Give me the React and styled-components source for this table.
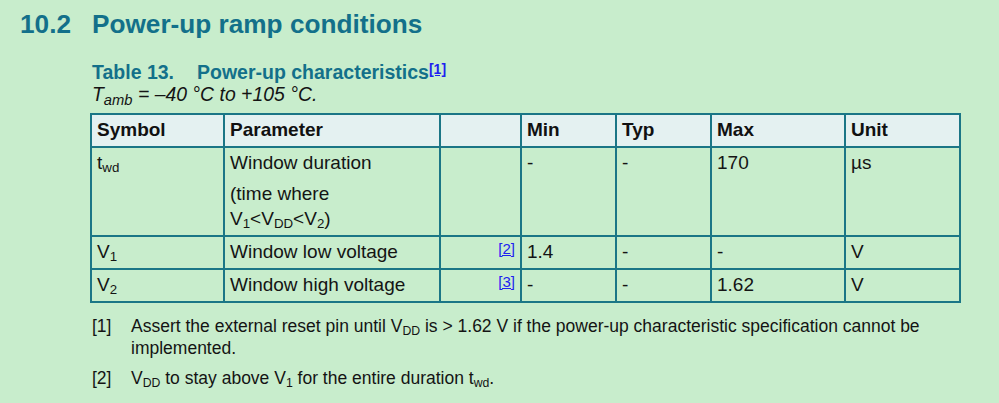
import React from 'react'
import styled, { createGlobalStyle } from 'styled-components'

const GlobalStyle = createGlobalStyle`
  html, body {
    margin: 0;
    padding: 0;
    background: #c8edcc;
  }
  body {
    font-family: "Liberation Sans", Arial, sans-serif;
    color: #141414;
  }
`

const Page = styled.div`
  width: 999px;
  height: 403px;
  overflow: hidden;
  padding: 10px 0 0 20px;
  box-sizing: border-box;
`

const Heading = styled.h2`
  display: flex;
  margin: 0;
  font-size: 26.2px;
  font-weight: bold;
  color: #13708a;
  line-height: 29px;
`

const HeadingNum = styled.span`
  width: 72px;
  flex: none;
`

const Caption = styled.div`
  margin: 22px 0 0 72px;
  display: flex;
  font-size: 19.5px;
  font-weight: bold;
  color: #13708a;
  line-height: 22px;
`

const CaptionNum = styled.span`
  width: 105px;
  flex: none;
`

const Ref = styled.a`
  color: #2020f0;
  text-decoration: underline;
  font-size: ${p => p.$size || '15px'};
  font-weight: ${p => (p.$bold ? 'bold' : 'normal')};
  vertical-align: ${p => p.$raise || '4px'};
  line-height: 0;
`

const Conditions = styled.div`
  margin: 0 0 0 72px;
  font-size: 19.4px;
  font-style: italic;
  line-height: 22px;
`

const Sub = styled.sub`
  font-size: ${p => p.$scale || '70%'};
  vertical-align: -0.25em;
  line-height: 0;
`

const Table = styled.table`
  margin: 8px 0 0 70px;
  border-collapse: collapse;
  table-layout: fixed;
  width: 869px;
  font-size: 19px;
  line-height: 22px;
`

const HeadCell = styled.th`
  background: #e4f1f1;
  border: 2px solid #1b7686;
  text-align: left;
  font-weight: bold;
  padding: 4px 4px 5px 5px;
  height: 22px;
  color: #111;
`

const Cell = styled.td`
  border: 2px solid #1b7686;
  vertical-align: top;
  text-align: ${p => (p.$right ? 'right' : 'left')};
  padding: 4px ${p => (p.$right ? '5px' : '4px')} 5px 5px;
  height: 22px;
`

const Para = styled.div`
  & + & {
    margin-top: 9px;
  }
`

const Line = styled.div`
  margin-top: 3px;
`

const Notes = styled.div`
  margin: 12px 0 0 72px;
  font-size: 17.5px;
  line-height: 22px;
`

const Note = styled.div`
  display: flex;
  width: 840px;
  & + & {
    margin-top: 8px;
  }
`

const NoteNum = styled.span`
  width: 39px;
  flex: none;
`

const cols = [133, 216, 81, 95, 95, 134, 115]

export default function App() {
  return (
    <>
      <GlobalStyle />
      <Page>
        <Heading>
          <HeadingNum>10.2</HeadingNum>
          <span>Power-up ramp conditions</span>
        </Heading>
        <Caption>
          <CaptionNum>Table 13.</CaptionNum>
          <span>
            Power-up characteristics
            <Ref $bold $size="14px" $raise="5px" href="#n1">[1]</Ref>
          </span>
        </Caption>
        <Conditions>
          T<Sub $scale="76%">amb</Sub> = –40 °C to +105 °C.
        </Conditions>
        <Table>
          <colgroup>
            {cols.map((w, i) => (
              <col key={i} style={{ width: w }} />
            ))}
          </colgroup>
          <thead>
            <tr>
              <HeadCell>Symbol</HeadCell>
              <HeadCell>Parameter</HeadCell>
              <HeadCell />
              <HeadCell>Min</HeadCell>
              <HeadCell>Typ</HeadCell>
              <HeadCell>Max</HeadCell>
              <HeadCell>Unit</HeadCell>
            </tr>
          </thead>
          <tbody>
            <tr>
              <Cell>
                t<Sub>wd</Sub>
              </Cell>
              <Cell>
                <Para>Window duration</Para>
                <Para>
                  (time where
                  <Line>
                    V<Sub>1</Sub>&lt;V<Sub>DD</Sub>&lt;V<Sub>2</Sub>)
                  </Line>
                </Para>
              </Cell>
              <Cell />
              <Cell>-</Cell>
              <Cell>-</Cell>
              <Cell>170</Cell>
              <Cell>µs</Cell>
            </tr>
            <tr>
              <Cell>
                V<Sub>1</Sub>
              </Cell>
              <Cell>Window low voltage</Cell>
              <Cell $right>
                <Ref href="#n2">[2]</Ref>
              </Cell>
              <Cell>1.4</Cell>
              <Cell>-</Cell>
              <Cell>-</Cell>
              <Cell>V</Cell>
            </tr>
            <tr>
              <Cell>
                V<Sub>2</Sub>
              </Cell>
              <Cell>Window high voltage</Cell>
              <Cell $right>
                <Ref href="#n3">[3]</Ref>
              </Cell>
              <Cell>-</Cell>
              <Cell>-</Cell>
              <Cell>1.62</Cell>
              <Cell>V</Cell>
            </tr>
          </tbody>
        </Table>
        <Notes>
          <Note id="n1">
            <NoteNum>[1]</NoteNum>
            <span>
              Assert the external reset pin until V<Sub>DD</Sub> is &gt; 1.62 V if the power-up
              characteristic specification cannot be implemented.
            </span>
          </Note>
          <Note id="n2">
            <NoteNum>[2]</NoteNum>
            <span>
              V<Sub>DD</Sub> to stay above V<Sub>1</Sub> for the entire duration t<Sub>wd</Sub>.
            </span>
          </Note>
        </Notes>
      </Page>
    </>
  )
}
